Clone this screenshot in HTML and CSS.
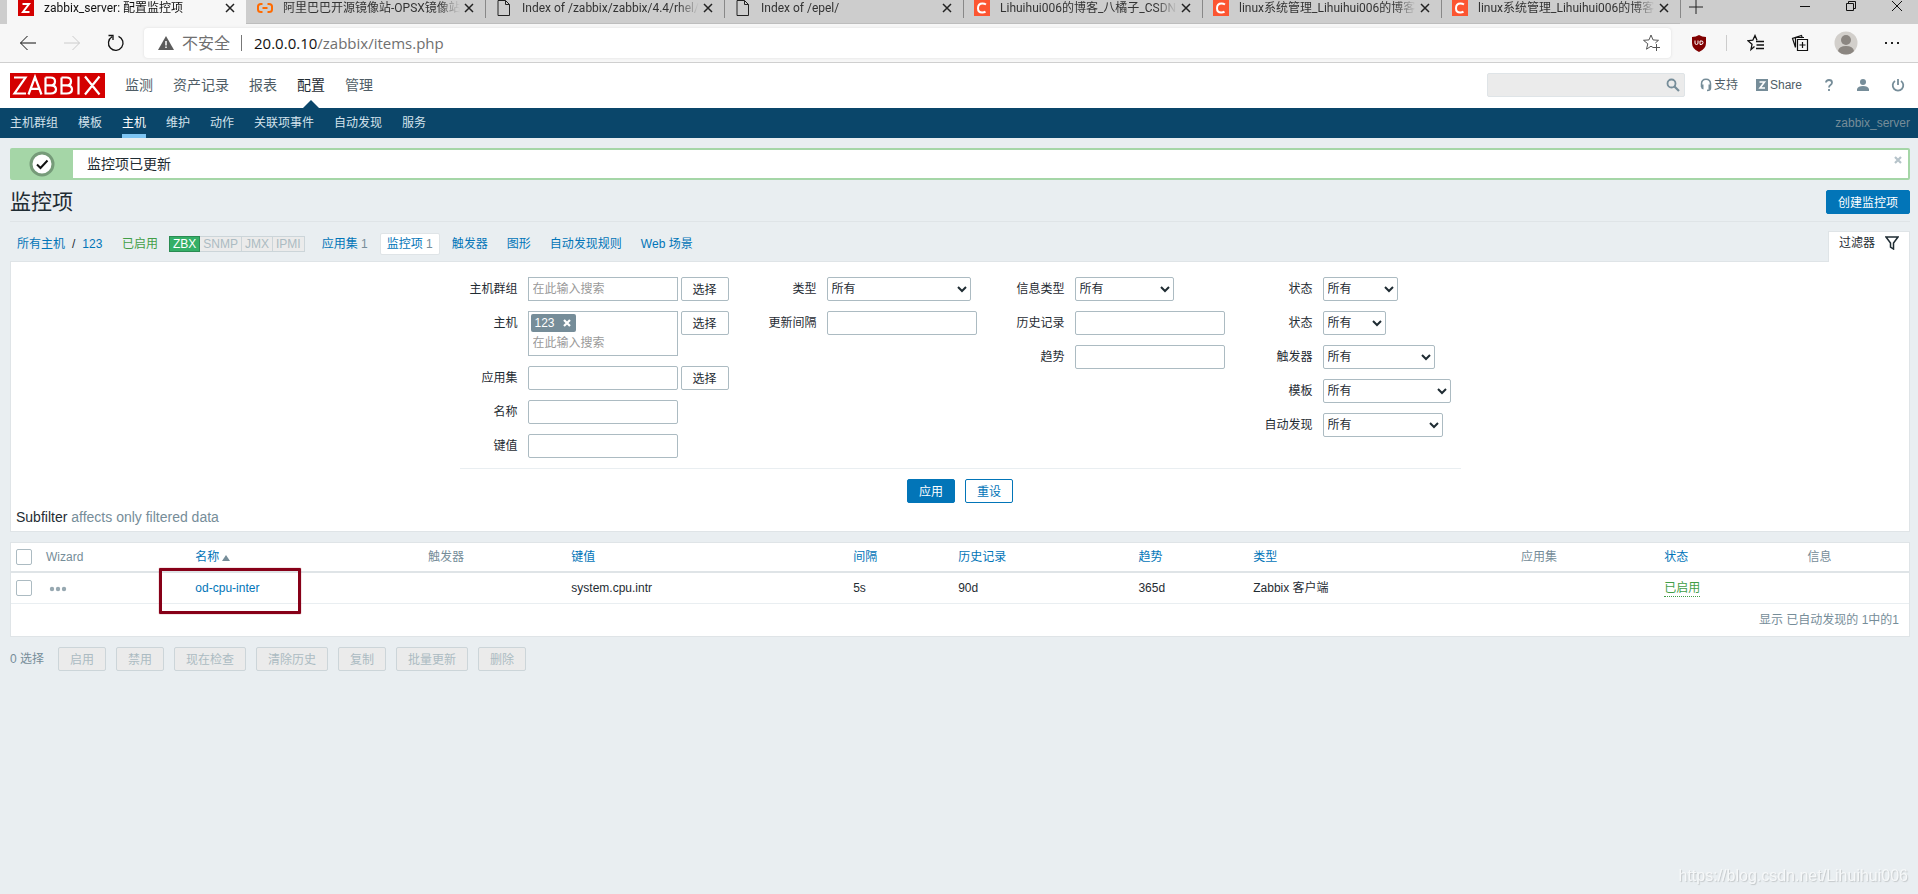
FILE: index.html
```html
<!DOCTYPE html>
<html lang="zh-CN">
<head>
<meta charset="utf-8">
<title>zabbix_server: 配置监控项</title>
<link rel="stylesheet" href="styles.css">
</head>
<body>
<div class="browser">
  <div class="tabs">
    <div class="tab tab-active">
      <svg class="favicon" viewBox="0 0 16 16"><rect width="16" height="16" fill="#d40000"/><path d="M4.500 4h6.500L5 12h6.500" fill="none" stroke="#fff" stroke-width="2"/></svg>
      <span class="tab-title">zabbix_server: 配置监控项</span>
      <button class="tab-close" aria-label="关闭"><svg viewBox="0 0 10 10"><path d="M1 1l8 8M9 1L1 9"/></svg></button>
    </div>
    <div class="tab">
      <svg class="favicon" viewBox="0 0 16 16"><path d="M5.500 4H4Q1 4 1 6.500v3Q1 12 4 12h1.500M10.500 4H12q3 0 3 2.500v3q0 2.500-3 2.500h-1.500M5.500 8h5" fill="none" stroke="#ff6a00" stroke-width="2"/></svg>
      <span class="tab-title">阿里巴巴开源镜像站-OPSX镜像站</span>
      <button class="tab-close" aria-label="关闭"><svg viewBox="0 0 10 10"><path d="M1 1l8 8M9 1L1 9"/></svg></button>
    </div>
    <div class="tab">
      <svg class="favicon" viewBox="0 0 16 16"><path d="M2 .5h7.500l4 4v11H2zM9.500.5v4h4" fill="none" stroke="#222"/></svg>
      <span class="tab-title">Index of /zabbix/zabbix/4.4/rhel/</span>
      <button class="tab-close" aria-label="关闭"><svg viewBox="0 0 10 10"><path d="M1 1l8 8M9 1L1 9"/></svg></button>
    </div>
    <div class="tab">
      <svg class="favicon" viewBox="0 0 16 16"><path d="M2 .5h7.500l4 4v11H2zM9.500.5v4h4" fill="none" stroke="#222"/></svg>
      <span class="tab-title">Index of /epel/</span>
      <button class="tab-close" aria-label="关闭"><svg viewBox="0 0 10 10"><path d="M1 1l8 8M9 1L1 9"/></svg></button>
    </div>
    <div class="tab">
      <svg class="favicon" viewBox="0 0 16 16"><rect width="16" height="16" fill="#fc5531"/><path d="M12 4.500Q10.500 3.500 8.500 3.500C5.500 3.500 4 5.500 4 8.200s1.500 4.300 4.200 4.300q2 0 3.300-.9" fill="none" stroke="#fff" stroke-width="2"/></svg>
      <span class="tab-title">Lihuihui006的博客_八橘子_CSDN</span>
      <button class="tab-close" aria-label="关闭"><svg viewBox="0 0 10 10"><path d="M1 1l8 8M9 1L1 9"/></svg></button>
    </div>
    <div class="tab">
      <svg class="favicon" viewBox="0 0 16 16"><rect width="16" height="16" fill="#fc5531"/><path d="M12 4.500Q10.500 3.500 8.500 3.500C5.500 3.500 4 5.500 4 8.200s1.500 4.300 4.200 4.300q2 0 3.300-.9" fill="none" stroke="#fff" stroke-width="2"/></svg>
      <span class="tab-title">linux系统管理_Lihuihui006的博客</span>
      <button class="tab-close" aria-label="关闭"><svg viewBox="0 0 10 10"><path d="M1 1l8 8M9 1L1 9"/></svg></button>
    </div>
    <div class="tab">
      <svg class="favicon" viewBox="0 0 16 16"><rect width="16" height="16" fill="#fc5531"/><path d="M12 4.500Q10.500 3.500 8.500 3.500C5.500 3.500 4 5.500 4 8.200s1.500 4.300 4.200 4.300q2 0 3.300-.9" fill="none" stroke="#fff" stroke-width="2"/></svg>
      <span class="tab-title">linux系统管理_Lihuihui006的博客</span>
      <button class="tab-close" aria-label="关闭"><svg viewBox="0 0 10 10"><path d="M1 1l8 8M9 1L1 9"/></svg></button>
    </div>
    <button class="tab-new" aria-label="新标签页"><svg width="14" height="14" viewBox="0 0 14 14"><path d="M7 0v14M0 7h14" stroke="#222"/></svg></button>
    <div class="window-buttons">
      <button aria-label="最小化"><svg width="12" height="12" viewBox="0 0 12 12"><path d="M1 6.500h10" /></svg></button>
      <button aria-label="还原"><svg width="12" height="12" viewBox="0 0 12 12"><path d="M1.500 3.500h7v7h-7zM3.500 3.500v-2h7v7h-2"/></svg></button>
      <button aria-label="关闭窗口"><svg width="12" height="12" viewBox="0 0 12 12"><path d="M1 1l10 10M11 1L1 11"/></svg></button>
    </div>
  </div>
  <div class="toolbar">
    <div class="nav-buttons">
      <button aria-label="后退"><svg width="18" height="18" viewBox="0 0 18 18"><path d="M17 9H1.500M8.500 2l-7 7 7 7" stroke="#111"/></svg></button>
      <button aria-label="前进"><svg width="18" height="18" viewBox="0 0 18 18"><path d="M1 9h15.500M9.500 2l7 7-7 7" stroke="#ccc"/></svg></button>
      <button aria-label="刷新"><svg width="18" height="18" viewBox="0 0 18 18"><path d="M11.500 2.300A7.300 7.300 0 1 1 5 2.800M1.500 1.500h4.500v4.500" stroke="#111" stroke-width="1.300"/></svg></button>
    </div>
    <div class="address">
      <svg width="16" height="14" viewBox="0 0 16 14"><path d="M8 0l8 14H0z" fill="#5c5c5c"/><path d="M8 5v4.500M8 10.500v1.500" stroke="#fff" stroke-width="1.500"/></svg>
      <span class="insecure">不安全</span>
      <span class="address-rule"></span>
      <span class="url"><b>20.0.0.10</b>/zabbix/items.php</span>
      <button class="fav-add" aria-label="收藏"><svg width="18" height="18" viewBox="0 0 18 18"><path d="M11 13.500l-2-1.300-4.500 3 1.300-5.400L1.500 6.300l5.500-.4L9 1l2 4.900 5.500.4-3.200 2.700M14.500 10v7M11 13.500h7" stroke="#555" fill="none"/></svg></button>
    </div>
    <div class="extensions">
      <svg width="14" height="17" viewBox="0 0 14 17"><path d="M7 0q3 2 7 2v6q0 6-7 9-7-3-7-9V2q4 0 7-2z" fill="#800000"/><path d="M3 5.500v2.500q0 1.500 1.500 1.500T6 8V5.500M8 6v3.500h1q2 0 2-2t-2-1.500z" fill="none" stroke="#fff"/></svg>
      <span class="ext-rule"></span>
      <div class="ext-tools">
        <svg width="18" height="18" viewBox="0 0 18 18"><path d="M7.500 12.500L4 15.500l1-5.200L1 6.700l4.800-.5L8 1.500l2 4.700M9 7.500h8M9.500 11h7.500M9 14.500h8" fill="none" stroke="#111" stroke-width="1.300"/></svg>
        <svg width="18" height="18" viewBox="0 0 18 18"><path d="M6.500 5.500h10v11h-10zM11.500 8v6M8.500 11h6M4.500 13.500L1.500 4.500l9-3 .8 2.500M4.500 13V3.500H13" fill="none" stroke="#111" stroke-width="1.200"/></svg>
        <svg width="24" height="24" viewBox="0 0 24 24"><circle cx="12" cy="12" r="11.500" fill="#d2cfcb"/><circle cx="12" cy="9" r="5" fill="#8b8681"/><path d="M4 20q1-5 8-5t8 5q-3 3.500-8 3.500T4 20z" fill="#8b8681"/></svg>
        <svg width="16" height="4" viewBox="0 0 16 4"><path d="M1 1h2v2H1zM7 1h2v2H7zM13 1h2v2h-2z" fill="#222"/></svg>
      </div>
    </div>
  </div>
</div>

<header class="top">
  <nav class="main-nav">
    <a class="logo" href="#" aria-label="ZABBIX"><svg width="95" height="25" viewBox="0 0 95 25"><rect width="95" height="25" fill="#d40000"/><path d="M4 4.500H15.500L4.500 20.500H16M18.500 21.500L25 4l6.500 17.500M20.500 15.800h9M35.500 4.500V20.500H40.500Q46 20.500 46 16.300 46 12.400 40.500 12.300H35.500M35.500 4.500H40.500Q45 4.500 45 8.400 45 12.300 40.500 12.300M51.500 4.500V20.500H56.500Q62 20.500 62 16.300 62 12.400 56.500 12.300H51.500M51.500 4.500H56.500Q61 4.500 61 8.400 61 12.300 56.500 12.300M68.500 3.500v18M75 3.500l14.500 18M89.500 3.500L75 21.500" fill="none" stroke="#fff" stroke-width="2.200"/></svg></a>
    <a href="#">监测</a><a href="#">资产记录</a><a href="#">报表</a><a class="current" href="#">配置</a><a href="#">管理</a>
  </nav>
  <div class="top-tools">
    <form class="search"><input type="text" aria-label="搜索"><button type="button" aria-label="搜索"><svg width="14" height="14" viewBox="0 0 14 14"><circle cx="5.500" cy="5.500" r="4" fill="none" stroke="#768d99" stroke-width="1.800"/><path d="M8.500 8.500L13 13" stroke="#768d99" stroke-width="2.200"/></svg></button></form>
    <a href="#"><svg width="12" height="14" viewBox="0 0 12 14"><path d="M1.500 9V6Q1.500 1.200 6 1.200T10.500 6v4Q10.500 12.500 7 12.500" fill="none" stroke="#768d99" stroke-width="1.500"/><path d="M1 6.500h2.500v5Q1 11 1 9zM11 6.500H8.500v5Q11 11 11 9z" fill="#768d99"/></svg>支持</a>
    <a href="#"><svg width="12" height="12" viewBox="0 0 12 12"><path d="M0 0h12v12H0z" fill="#768d99"/><path d="M3.500 3h5L4 9h5" fill="none" stroke="#fff" stroke-width="1.600"/></svg>Share</a>
    <a class="icon-link" href="#" aria-label="帮助"><svg width="12" height="14" viewBox="0 0 12 14"><path d="M3 4.500Q3 2 6 2t3 2.500Q9 6 7.500 7T6 9.500M6 11v2" fill="none" stroke="#768d99" stroke-width="1.800"/></svg></a>
    <a class="icon-link" href="#" aria-label="用户"><svg width="14" height="14" viewBox="0 0 14 14"><circle cx="7" cy="4" r="3" fill="#768d99"/><path d="M1 13v-2q1-3 6-3t6 3v2z" fill="#768d99"/></svg></a>
    <a class="icon-link" href="#" aria-label="退出"><svg width="14" height="14" viewBox="0 0 14 14"><path d="M4 3a5.300 5.300 0 1 0 6 0M7 1v6" fill="none" stroke="#768d99" stroke-width="1.800"/></svg></a>
  </div>
</header>
<nav class="sub-nav">
  <a href="#">主机群组</a><a href="#">模板</a><a class="current" href="#">主机</a><a href="#">维护</a><a href="#">动作</a><a href="#">关联项事件</a><a href="#">自动发现</a><a href="#">服务</a>
  <span class="server">zabbix_server</span>
</nav>

<main>
  <div class="message">
    <div class="message-icon"><svg width="26" height="26" viewBox="0 0 26 26"><circle cx="13" cy="13" r="11" fill="#fff" stroke="#769b79" stroke-width="3"/><path d="M8 13.500l3.500 3.500L18.500 9.500" fill="none" stroke="#111" stroke-width="2"/></svg></div>
    <span>监控项已更新</span>
    <button class="message-close" aria-label="关闭"><svg width="8" height="8" viewBox="0 0 8 8"><path d="M1 1l6 6M7 1L1 7" stroke="#b6c3ca" stroke-width="2.200"/></svg></button>
  </div>

  <div class="heading">
    <h1>监控项</h1>
    <button class="btn btn-primary">创建监控项</button>
  </div>

  <div class="crumbs">
    <div class="crumb-path"><a href="#">所有主机</a><span>/</span><a href="#">123</a></div>
    <span class="green">已启用</span>
    <div class="agents"><span class="on">ZBX</span><span>SNMP</span><span>JMX</span><span>IPMI</span></div>
    <div class="links">
      <span><a href="#">应用集</a> <i>1</i></span>
      <span class="selected"><a href="#">监控项</a> <i>1</i></span>
      <a href="#">触发器</a><a href="#">图形</a><a href="#">自动发现规则</a><a href="#">Web 场景</a>
    </div>
    <a class="filter-tab" href="#">过滤器<svg width="14" height="14" viewBox="0 0 14 14"><path d="M1 1h12L8.500 7v6L5.500 11V7z" fill="none" stroke="#1f2c33" stroke-width="1.500"/></svg></a>
  </div>

  <form class="panel filter">
    <div class="filter-grid">
      <div class="fields">
        <label for="groups">主机群组</label><div class="pair"><input id="groups" class="multi" type="text" placeholder="在此输入搜索"><button type="button" class="btn">选择</button></div>
        <label for="hosts">主机</label><div class="pair"><div class="host-box"><span class="chip">123<button type="button" aria-label="移除"><svg width="8" height="8" viewBox="0 0 8 8"><path d="M1 1l6 6M7 1L1 7" stroke="#fff" stroke-width="2.200"/></svg></button></span><input id="hosts" type="text" placeholder="在此输入搜索"></div><button type="button" class="btn">选择</button></div>
        <label for="app">应用集</label><div class="pair"><input id="app" type="text"><button type="button" class="btn">选择</button></div>
        <label for="name">名称</label><input id="name" type="text">
        <label for="key">键值</label><input id="key" type="text">
      </div>
      <div class="fields">
        <label for="type">类型</label><select id="type" class="w144"><option>所有</option></select>
        <label for="delay">更新间隔</label><input id="delay" type="text">
      </div>
      <div class="fields">
        <label for="vtype">信息类型</label><select id="vtype" class="w99"><option>所有</option></select>
        <label for="history">历史记录</label><input id="history" type="text">
        <label for="trends">趋势</label><input id="trends" type="text">
      </div>
      <div class="fields">
        <label for="state">状态</label><select id="state" class="w75"><option>所有</option></select>
        <label for="status">状态</label><select id="status" class="w63"><option>所有</option></select>
        <label for="trig">触发器</label><select id="trig" class="w112"><option>所有</option></select>
        <label for="tpl">模板</label><select id="tpl" class="w128"><option>所有</option></select>
        <label for="disc">自动发现</label><select id="disc" class="w120"><option>所有</option></select>
      </div>
    </div>
    <div class="filter-actions"><button type="button" class="btn btn-primary">应用</button><button type="button" class="btn btn-outline">重设</button></div>
    <div class="subfilter"><b>Subfilter</b> affects only filtered data</div>
  </form>

  <div class="panel list">
    <table>
      <colgroup><col class="c-check"><col class="c-wizard"><col class="c-name"><col class="c-mid"><col class="c-key"><col class="c-interval"><col class="c-history"><col class="c-trends"><col class="c-type"><col class="c-mid"><col class="c-mid"><col></colgroup>
      <thead><tr>
        <th><input type="checkbox" aria-label="全选"></th><th>Wizard</th><th><a href="#">名称</a><span class="sort"></span></th><th>触发器</th><th><a href="#">键值</a></th><th><a href="#">间隔</a></th><th><a href="#">历史记录</a></th><th><a href="#">趋势</a></th><th><a href="#">类型</a></th><th>应用集</th><th><a href="#">状态</a></th><th>信息</th>
      </tr></thead>
      <tbody><tr>
        <td><input type="checkbox" aria-label="选择 od-cpu-inter"></td>
        <td><button class="dots" aria-label="菜单"><svg width="18" height="6" viewBox="0 0 18 6"><g fill="#97a8b1"><circle cx="3" cy="3" r="2.200"/><circle cx="9" cy="3" r="2.200"/><circle cx="15" cy="3" r="2.200"/></g></svg></button></td>
        <td class="marked"><a href="#">od-cpu-inter</a><span class="marker"></span></td><td></td><td>system.cpu.intr</td><td>5s</td><td>90d</td><td>365d</td><td>Zabbix 客户端</td><td></td><td><a class="green dotted" href="#">已启用</a></td><td></td>
      </tr></tbody>
    </table>
    <div class="total">显示 已自动发现的 1中的1</div>
  </div>

  <div class="bulk">
    <span>0 选择</span>
    <button class="btn" disabled>启用</button><button class="btn" disabled>禁用</button><button class="btn" disabled>现在检查</button><button class="btn" disabled>清除历史</button><button class="btn" disabled>复制</button><button class="btn" disabled>批量更新</button><button class="btn" disabled>删除</button>
  </div>
</main>
<div class="watermark">https://blog.csdn.net/Lihuihui006</div>
</body>
</html>
```
FILE: styles.css
```css
* { box-sizing: border-box; }
body {
  margin: 0;
  min-height: 100vh;
  background: #e9eef1;
  color: #1f2c33;
  font: 12px/18px "Liberation Sans", "Noto Sans CJK SC", sans-serif;
}
a { color: #0275b8; text-decoration: none; }
button { font: inherit; color: inherit; margin: 0; padding: 0; border: 0; background: none; }
svg { display: block; flex: none; }
i { font-style: normal; }
b { font-weight: normal; }

/* Browser frame */
.browser { font-family: "Open Sans", "Noto Sans CJK SC", sans-serif; background: #f7f7f7; border-bottom: 1px solid #cfcfcf; }
.tabs { display: flex; height: 24px; padding-left: 7px; background: #cdcdcd; overflow: hidden; font-family: Roboto, "Noto Sans CJK SC", sans-serif; }
.tab { display: flex; flex: 0 1 239px; min-width: 0; height: 24px; padding: 0 11px; border-bottom: 1px solid #bdbdbd; color: #333; }
.tab + .tab + .tab, .tab-new { background: linear-gradient(#888, #888) 0 0 / 1px 18px no-repeat; }
.tab-active { background: #f7f7f7; border-bottom: 0; color: #111; }
.favicon { width: 16px; height: 16px; }
.tab-title { flex: 1; min-width: 0; margin: 0 4px 0 10px; line-height: 16px; white-space: nowrap; overflow: hidden; mask-image: linear-gradient(90deg, #000 88%, transparent); }
.tab-close { display: flex; height: 16px; align-items: center; }
.tab-close svg { width: 10px; height: 10px; stroke: #222; stroke-width: 1.5; }
.tab-new { display: flex; padding-left: 9px; }
.window-buttons { display: flex; gap: 34px; margin-left: auto; padding-right: 15px; height: 12px; }
.window-buttons svg { fill: none; stroke: #111; }
.toolbar { display: flex; align-items: center; height: 38px; padding: 0 18px 0 19px; }
.nav-buttons { display: flex; gap: 26px; width: 125px; }
.nav-buttons svg { fill: none; }
.address { display: flex; flex: 1; align-items: center; height: 30px; padding: 0 11px 0 14px; background: #fff; border-radius: 4px; box-shadow: 0 0 3px #ddd; font-size: 15px; color: #707070; }
.insecure { font-size: 16px; margin-left: 8px; }
.address-rule { width: 1px; height: 16px; margin: 0 12px 0 11px; background: #777; }
.url b { color: #111; }
.fav-add { margin-left: auto; }
.extensions { display: flex; align-items: center; width: 229px; padding-left: 21px; }
.ext-rule { width: 1px; height: 16px; margin: 0 20px; background: #ccc; }
.ext-tools { display: flex; flex: 1; align-items: center; justify-content: space-between; }

/* Header */
.top { display: flex; justify-content: space-between; height: 45px; padding: 10px 13px 0 10px; background: #fff; }
.main-nav { display: flex; gap: 20px; height: 35px; font-size: 14px; line-height: 24px; }
.main-nav a { color: #4f5d66; }
.main-nav .current { position: relative; color: #1f2c33; }
.main-nav .current::after { content: ""; position: absolute; bottom: 0; left: 50%; margin-left: -8px; border: 8px solid transparent; border-top: 0; border-bottom-color: #0a466a; }
.top-tools { display: flex; align-items: center; height: 24px; gap: 18px; }
.top-tools a { display: flex; align-items: center; gap: 2px; color: #4f5d66; }
.top-tools a + .icon-link { margin-left: 3px; }
.search { display: flex; position: relative; }
.search + a { margin-left: -3px; }
.search button { position: absolute; right: 5px; top: 5px; }
.sub-nav { display: flex; gap: 20px; height: 30px; padding: 0 8px 0 10px; background: #0a466a; }
.sub-nav a { height: 30px; color: #d3e2ec; line-height: 30px; }
.sub-nav .current { color: #fff; border-bottom: 4px solid #7dc5f3; }
.server { margin-left: auto; line-height: 30px; color: #768d99; }

/* Page */
main { padding: 10px 8px 0 10px; }
.message { display: flex; height: 32px; background: #fff; border: 2px solid #a5d6a7; border-radius: 2px; font-size: 14px; line-height: 28px; }
.message-icon { display: flex; align-items: center; justify-content: center; width: 61px; margin-right: 14px; padding-right: 2px; background: #a5d6a7; }
.message-close { margin-left: auto; align-self: flex-start; padding: 6px 6px 0 0; }
.heading { display: flex; justify-content: space-between; height: 42px; padding-top: 10px; border-bottom: 1px solid #dfe4e7; }
h1 { margin: 0; font-size: 21px; line-height: 24px; font-weight: normal; }
.btn { flex: none; height: 24px; padding: 1px 11px 0; background: #fff; border: 1px solid #acbbc2; border-radius: 2px; line-height: 22px; white-space: nowrap; }
.btn-primary { background: #0275b8; border-color: #0275b8; color: #fff; }
.btn-outline { border-color: #0275b8; color: #0275b8; }
.btn:disabled { background: #ebebeb; border-color: #ccd5d9; color: #acbbc2; }
.crumbs { display: flex; align-items: center; height: 39px; padding: 5px 0 1px 7px; }
.crumb-path { display: flex; gap: 7px; width: 105px; }
.green { color: #429e47; }
.agents { display: flex; margin: 0 17px 0 11px; }
.agents span { height: 16px; padding: 0 3px; border: 1px solid #ccd5d9; border-left-width: 0; background: #ebebeb; color: #acbbc2; line-height: 14px; }
.agents .on { background: #34af67; border-color: #2a8b52; border-left-width: 1px; color: #fff; }
.links { display: flex; align-items: center; gap: 19px; }
.links i { color: #768d99; }
.links .selected { height: 22px; margin: 0 -7px; padding: 0 6px; background: #fff; border: 1px solid #dfe4e7; border-radius: 2px; line-height: 20px; }
.filter-tab { display: flex; position: relative; align-self: flex-start; align-items: center; gap: 10px; height: 31px; margin: 4px 0 -3px auto; padding: 0 10px 8px; background: #fff; border: 1px solid #dfe4e7; border-bottom: 0; color: #1f2c33; }
.panel { background: #fff; border: 1px solid #dfe4e7; }
.filter { padding-top: 15px; margin-bottom: 10px; }
.filter-grid { display: grid; grid-template-columns: 269px 248px 248px 236px; width: max-content; margin: 0 auto; padding-bottom: 10px; border-bottom: 1px solid #e9eef1; }
.fields { display: grid; grid-template-columns: 1fr 150px; column-gap: 10px; row-gap: 10px; align-content: start; line-height: 24px; }
.fields:first-child { grid-template-columns: 58px 201px; }
.fields:last-child { grid-template-columns: 88px 138px; }
.fields label { text-align: right; line-height: 24px; }
.pair { display: flex; align-items: flex-start; gap: 3px; }
input, select { font: inherit; color: inherit; }
input[type="text"] { flex: none; width: 150px; height: 24px; padding: 0 4px; border: 1px solid #acbbc2; border-radius: 2px; background: #fff; line-height: 22px; }
.top-tools input[type="text"] { width: 198px; background: #ebebeb; border-color: #dfe4e7; }
input::placeholder { color: #9a9a9a; }
.fields .multi { border-radius: 0; }
.host-box { display: flex; flex: none; flex-direction: column; align-items: flex-start; width: 150px; height: 45px; padding: 2px; border: 1px solid #acbbc2; }
.host-box input[type="text"] { width: 100%; height: 22px; padding: 0 2px; border: 0; line-height: 22px; }
.chip { display: flex; align-items: center; gap: 8px; height: 18px; padding: 0 5px 0 4px; background: #768d99; border-radius: 2px; color: #fff; line-height: 18px; }
select { height: 24px; padding: 0; background: #fff; border: 1px solid #acbbc2; border-radius: 2px; }
.w144 { width: 144px; }
.w99 { width: 99px; }
.w75 { width: 75px; }
.w63 { width: 63px; }
.w112 { width: 112px; }
.w128 { width: 128px; }
.w120 { width: 120px; }
.filter-actions { display: flex; justify-content: center; gap: 10px; padding-top: 10px; }
.subfilter { padding: 4px 5px; font-size: 14px; line-height: 20px; color: #768d99; }
.subfilter b { color: #1f2c33; }

/* Item list */
table { width: 100%; table-layout: fixed; border-collapse: separate; border-spacing: 0; }
th, td { height: 30px; padding: 0 5px; text-align: left; font-weight: normal; white-space: nowrap; border-bottom: 1px solid #e9eef1; }
td { height: 31px; }
th { color: #768d99; border-bottom: 2px solid #dfe4e7; }
.c-check { width: 30px; }
.c-wizard { width: 7.87%; }
.c-name { width: 12.26%; }
.c-mid { width: 7.55%; }
.c-key { width: 14.85%; }
.c-interval { width: 5.53%; }
.c-history { width: 9.5%; }
.c-trends { width: 6.05%; }
.c-type { width: 14.1%; }
input[type="checkbox"] { appearance: none; display: block; width: 16px; height: 16px; margin: 0; background: #fff; border: 1px solid #acbbc2; border-radius: 2px; }
.sort { display: inline-block; margin-left: 3px; border: 4px solid transparent; border-top: 0; border-bottom: 6px solid #768d99; }
.dots { display: block; padding: 2px 0 0 3px; }
.marked { position: relative; }
.marker { position: absolute; left: -31px; top: -5px; width: 142px; height: 46px; border: 3px solid #870018; border-radius: 1px; box-shadow: 0 0 1px #870018; }
.dotted { display: inline-block; line-height: 15px; border-bottom: 1px dotted #429e47; }
.total { padding: 7px 10px; text-align: right; color: #768d99; }
.bulk { display: flex; align-items: center; gap: 10px; margin-top: 10px; color: #768d99; }
.bulk span { margin-right: 4px; }
.watermark { position: fixed; right: 10px; bottom: 8px; font-size: 16px; line-height: 20px; color: #f6f8f9; text-shadow: 1px 1px 1px #c4c8ca; }
```
